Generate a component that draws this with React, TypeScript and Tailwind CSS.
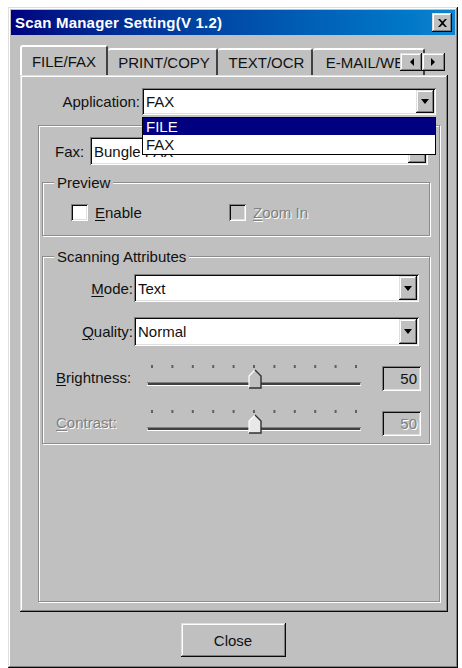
import type { ReactNode } from 'react'

const raised =
  'shadow-[inset_-1px_-1px_#0a0a0a,inset_1px_1px_#dfdfdf,inset_-2px_-2px_#808080,inset_2px_2px_#ffffff]'
const sunken =
  'shadow-[inset_1px_1px_#808080,inset_-1px_-1px_#ffffff,inset_2px_2px_#0a0a0a,inset_-2px_-2px_#dfdfdf]'
const etched = 'border border-[#8c8c8c] shadow-[inset_1px_1px_#ffffff,1px_1px_#ffffff]'
const disabledText = 'text-[#808080] [text-shadow:1px_1px_0_#ffffff]'

function DropButton() {
  return (
    <div className={`absolute right-[2px] top-[2px] bottom-[2px] w-[18px] bg-[#c0c0c0] flex items-center justify-center ${raised}`}>
      <svg width="8" height="5" viewBox="0 0 8 5">
        <path d="M0 0h8L4 5z" fill="#000" />
      </svg>
    </div>
  )
}

function Combo({ value, className, children }: { value: string; className: string; children?: ReactNode }) {
  return (
    <div className={`relative bg-white ${sunken} ${className}`}>
      <div className="h-full flex items-center pl-[4px] text-[#111] whitespace-nowrap overflow-hidden">{value}</div>
      <DropButton />
      {children}
    </div>
  )
}

function Underlined({ first, rest }: { first: string; rest: string }) {
  return (
    <>
      <span className="underline underline-offset-2">{first}</span>
      {rest}
    </>
  )
}

function Slider({ disabled }: { disabled?: boolean }) {
  const ticks = Array.from({ length: 11 }, (_, i) => 5 + i * 20.4)
  return (
    <svg width="214" height="28" viewBox="0 0 214 28">
      {ticks.map((x, i) => (
        <rect key={i} x={x - 1} y={2} width={2} height={3} fill="#606060" />
      ))}
      {/* groove */}
      <rect x="0" y="19" width="214" height="1" fill="#808080" />
      <rect x="1" y="20" width="212" height="2" fill="#404040" />
      <rect x="0" y="22" width="214" height="1" fill="#ffffff" />
      {/* thumb */}
      <path d="M102 13 L108 7 L114 13 L114 25 L102 25 Z" fill={disabled ? '#e8e8e8' : '#c0c0c0'} />
      <path d="M102 25 L102 13 L108 7" fill="none" stroke="#ffffff" strokeWidth="1.2" />
      <path d="M108 7 L114 13 L114 25 L102 25" fill="none" stroke="#303030" strokeWidth="1.4" />
    </svg>
  )
}

function Checkbox({ disabled }: { disabled?: boolean }) {
  return <div className={`w-[17px] h-[17px] ${disabled ? 'bg-[#c0c0c0]' : 'bg-white'} ${sunken}`} />
}

export default function App() {
  const tabs = [
    { label: 'PRINT/COPY', w: 'w-[110px]' },
    { label: 'TEXT/OCR', w: 'w-[95px]' },
    { label: 'E-MAIL/WEB', w: 'w-[112px]' },
  ]

  return (
    <div className="w-[462px] h-[668px] bg-white pl-[8px] pt-[7px] font-['Liberation_Sans',Arial,sans-serif] text-[15px] text-[#111] leading-none">
      <div className={`w-[450px] h-[661px] bg-[#c0c0c0] p-[3px] flex flex-col ${raised}`}>
        {/* Title bar */}
        <div className="h-[25px] bg-linear-to-r from-[#000080] to-[#1084d0] flex items-center justify-between pl-[4px] pr-[3px]">
          <span className="text-white font-bold text-[15px] tracking-[0.2px]">Scan Manager Setting(V 1.2)</span>
          <div className={`w-[20px] h-[19px] bg-[#c0c0c0] flex items-center justify-center ${raised}`}>
            <svg width="9" height="8" viewBox="0 0 9 8">
              <path d="M0 0h2l2.5 2.5L7 0h2L5.5 4 9 8H7L4.5 5.5 2 8H0l3.5-4z" fill="#000" />
            </svg>
          </div>
        </div>

        {/* Tab strip */}
        <div className="relative mt-[10px] ml-[9px] w-[428px] h-[30px] flex items-end overflow-hidden">
          <div className="relative z-10 -mb-[2px] w-[88px] h-[32px] bg-[#c0c0c0] rounded-t-[3px] border-t-2 border-l-2 border-t-white border-l-white border-r-2 border-r-[#404040] flex items-center justify-center pb-[2px]">
            FILE/FAX
          </div>
          {tabs.map((t) => (
            <div
              key={t.label}
              className={`${t.w} shrink-0 h-[27px] bg-[#c0c0c0] rounded-t-[3px] border-t-2 border-t-white border-r-2 border-r-[#404040] flex items-center justify-center whitespace-nowrap pl-[4px] overflow-hidden`}
            >
              {t.label}
            </div>
          ))}
          <div className="absolute right-[3px] bottom-[4px] flex">
            <div className={`w-[22px] h-[18px] bg-[#c0c0c0] flex items-center justify-center ${raised}`}>
              <svg width="5" height="8" viewBox="0 0 5 8">
                <path d="M5 0v8L1 4z" fill="#000" />
              </svg>
            </div>
            <div className={`w-[23px] h-[18px] bg-[#c0c0c0] flex items-center justify-center ${raised}`}>
              <svg width="5" height="8" viewBox="0 0 5 8">
                <path d="M0 0v8l4-4z" fill="#000" />
              </svg>
            </div>
          </div>
        </div>

        {/* Tab panel */}
        <div className={`ml-[9px] w-[428px] h-[537px] bg-[#c0c0c0] pt-[13px] ${raised}`}>
          <div className="relative z-20 flex items-center justify-end pr-[12px]">
            <span className="mr-[2px]">Application:</span>
            <Combo value="FAX" className="w-[294px] h-[27px]">
              <div className="absolute left-0 top-full mt-[2px] w-full border border-black bg-white">
                <div className="h-[17px] bg-[#000080] text-white flex items-center pl-[3px]">FILE</div>
                <div className="h-[19px] flex items-center pl-[3px]">FAX</div>
              </div>
            </Combo>
          </div>

          <div className={`mt-[10px] ml-[18px] w-[402px] h-[477px] ${etched}`}>
            {/* Fax */}
            <div className="mt-[11px] pl-[16px] flex items-center">
              <span className="w-[35px]">Fax:</span>
              <Combo value="Bungle FAX" className="w-[338px] h-[28px]" />
            </div>

            {/* Preview */}
            <fieldset className={`mt-[9px] ml-[3px] w-[388px] ${etched}`}>
              <legend className="ml-[11px] px-[3px] leading-[17px] bg-[#c0c0c0]">Preview</legend>
              <div className="flex items-center pl-[28px] pt-[13px] pb-[14px]">
                <div className="w-[158px] flex items-center">
                  <Checkbox />
                  <span className="ml-[7px]">
                    <Underlined first="E" rest="nable" />
                  </span>
                </div>
                <div className="flex items-center">
                  <Checkbox disabled />
                  <span className={`ml-[7px] ${disabledText}`}>
                    <Underlined first="Z" rest="oom In" />
                  </span>
                </div>
              </div>
            </fieldset>

            {/* Scanning Attributes */}
            <fieldset className={`mt-[12px] ml-[3px] w-[388px] ${etched}`}>
              <legend className="ml-[11px] px-[3px] leading-[17px] bg-[#c0c0c0]">Scanning Attributes</legend>
              <div className="pl-[13px] pr-[8px] pt-[9px] pb-[7px]">
                <div className="flex items-center">
                  <span className="w-[78px] text-right pr-[1px]">
                    <Underlined first="M" rest="ode:" />
                  </span>
                  <Combo value="Text" className="w-[285px] h-[28px]" />
                </div>
                <div className="mt-[15px] flex items-center">
                  <span className="w-[78px] text-right pr-[1px]">
                    <Underlined first="Q" rest="uality:" />
                  </span>
                  <Combo value="Normal" className="w-[285px] h-[29px]" />
                </div>
                <div className="mt-[17px] h-[28px] flex items-end">
                  <span className="w-[91px] self-center">
                    <Underlined first="B" rest="rightness:" />
                  </span>
                  <Slider />
                  <div className={`ml-[21px] w-[39px] h-[25px] flex items-center justify-end pr-[4px] ${sunken}`}>50</div>
                </div>
                <div className="mt-[17px] h-[28px] flex items-end">
                  <span className={`w-[91px] self-center ${disabledText}`}>
                    <Underlined first="C" rest="ontrast:" />
                  </span>
                  <Slider disabled />
                  <div className={`ml-[21px] w-[39px] h-[25px] flex items-center justify-end pr-[4px] ${sunken} ${disabledText}`}>50</div>
                </div>
              </div>
            </fieldset>
          </div>
        </div>

        {/* Footer */}
        <div className="mt-[11px] flex justify-center">
          <button className={`w-[105px] h-[34px] bg-[#c0c0c0] flex items-center justify-center ${raised}`}>Close</button>
        </div>
      </div>
    </div>
  )
}
